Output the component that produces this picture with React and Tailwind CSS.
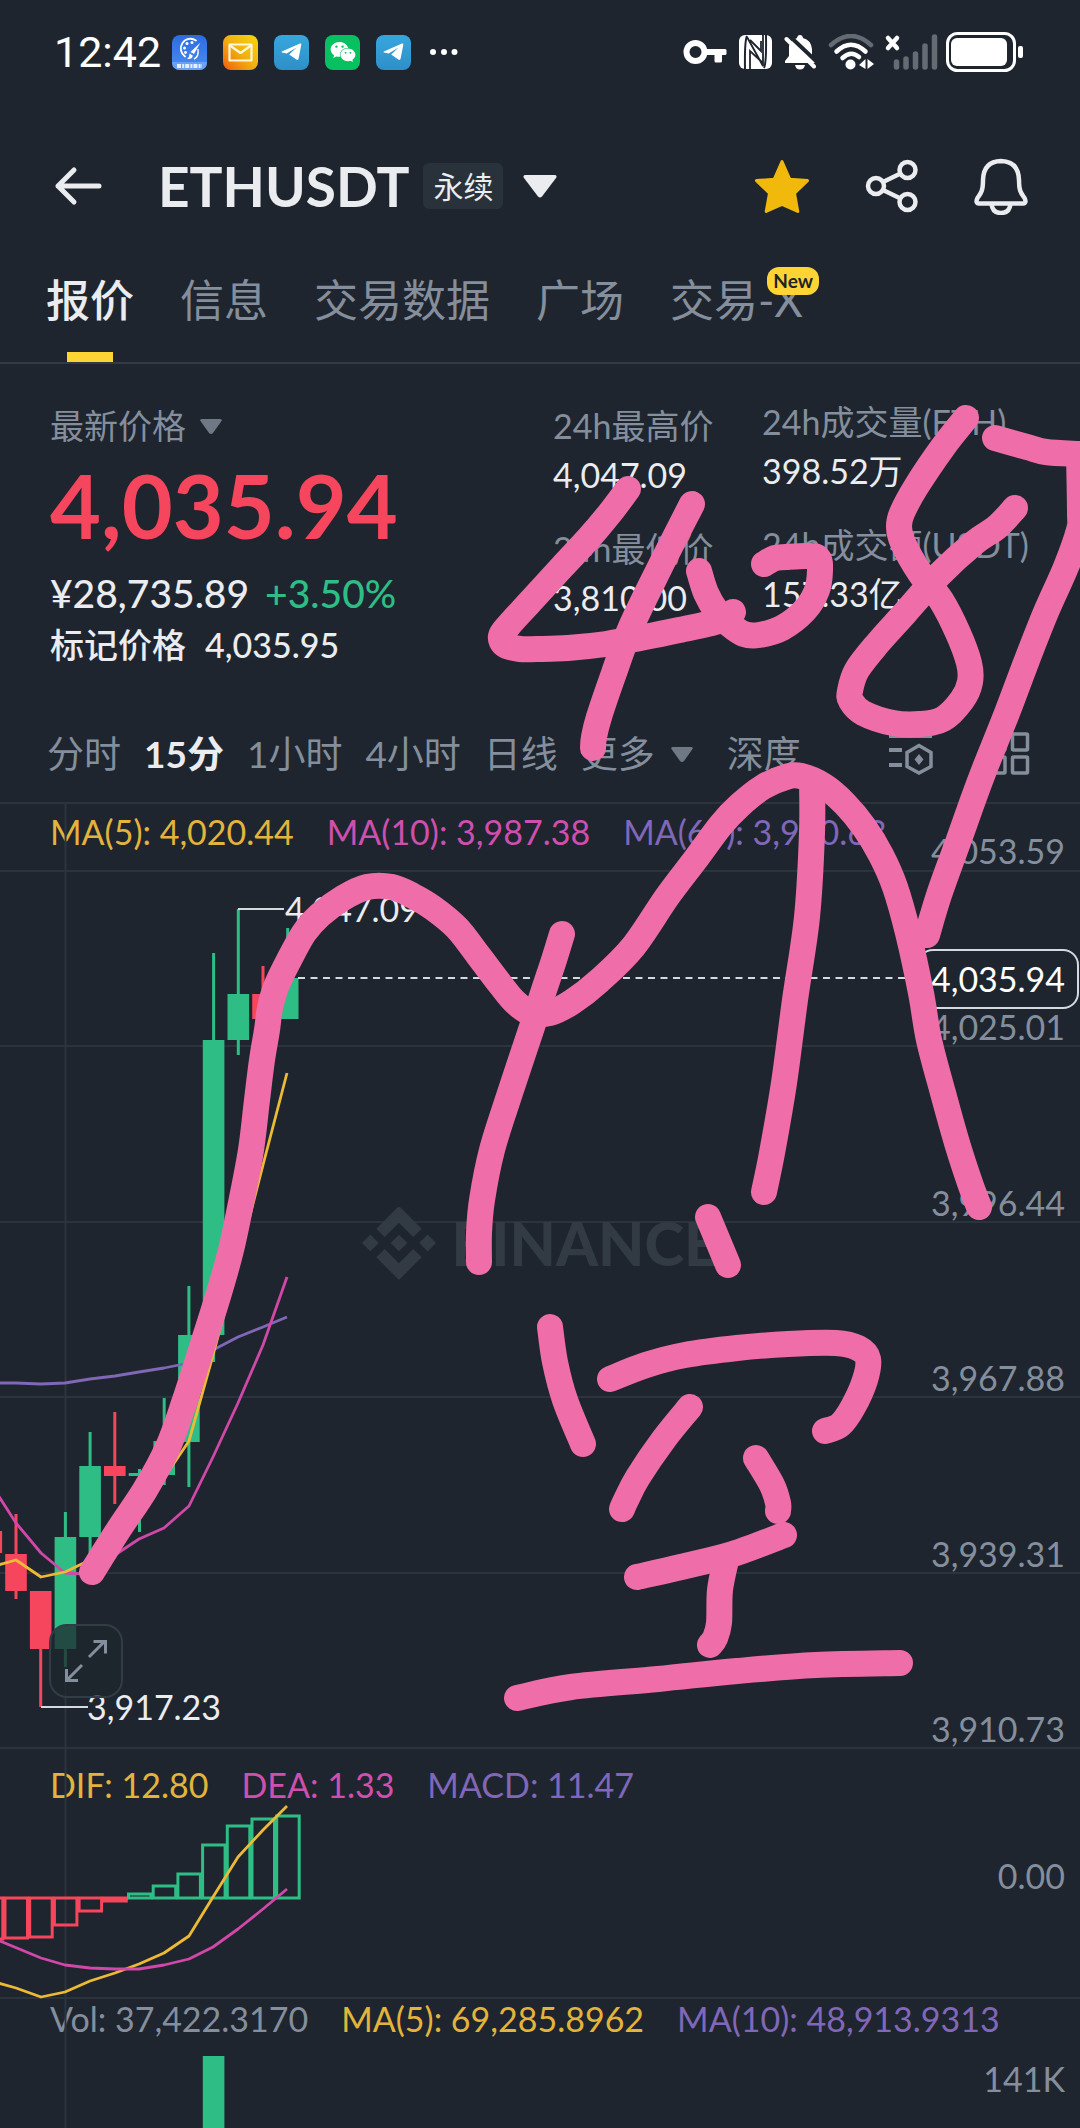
import { FaWeixin } from 'react-icons/fa'
import { SiBinance } from 'react-icons/si'

const TABS = ['报价', '信息', '交易数据', '广场', '交易-X']
const INTERVALS = ['分时', '15分', '1小时', '4小时', '日线']
const AXIS = ['4,025.01', '3,996.44', '3,967.88', '3,939.31', '3,910.73']

const GREEN = '#2ebd85'
const RED = '#f6465d'
const STEP = 24.7

// [high, bodyTop, bodyBottom, low, color]
const CANDLES = [
  [1531, 1531, 1553, 1553, RED],
  [1514, 1554, 1591, 1599, RED],
  [1591, 1591, 1649, 1707, RED],
  [1512, 1537, 1649, 1667, GREEN],
  [1432, 1466, 1537, 1560, GREEN],
  [1412, 1466, 1476, 1504, RED],
  [1469, 1473, 1476, 1532, GREEN],
  [1398, 1441, 1475, 1485, GREEN],
  [1286, 1335, 1442, 1487, GREEN],
  [953, 1040, 1335, 1362, GREEN],
  [909, 994, 1040, 1055, GREEN],
  [966, 994, 1019, 1019, RED],
  [928, 978, 1019, 1019, GREEN],
]

const MACD_BARS = [1939, 1938, 1937, 1925, 1911, 1901, 1894, 1886, 1874, 1845, 1826, 1819, 1816]

const MA5 = [[-9, 1567], [16, 1560], [41, 1577], [65, 1572], [90, 1560], [115, 1524], [139, 1500], [164, 1478], [189, 1441], [213, 1355], [238, 1262], [263, 1165], [287, 1073]]
const MA10 = [[-9, 1484], [16, 1523], [41, 1553], [65, 1573], [85, 1574], [118, 1553], [139, 1539], [164, 1528], [189, 1506], [213, 1457], [238, 1403], [263, 1345], [287, 1277]]
const MA60 = [[-9, 1383], [16, 1383], [41, 1384], [65, 1383], [90, 1379], [115, 1376], [139, 1372], [164, 1368], [189, 1363], [213, 1350], [238, 1337], [263, 1327], [287, 1317]]
const DIF = [[-9, 1981], [16, 1988], [41, 1997], [65, 1992], [90, 1981], [115, 1973], [139, 1964], [164, 1953], [189, 1936], [213, 1897], [238, 1857], [263, 1830], [287, 1806]]
const DEA = [[-9, 1936], [0, 1941], [41, 1958], [65, 1965], [90, 1968], [115, 1969], [139, 1969], [164, 1965], [189, 1959], [213, 1947], [238, 1929], [263, 1909], [287, 1889]]

const STROKES = [
  // 4
  [[628, 489], [610, 513], [589, 538], [562, 567], [530, 602], [509, 625], [501, 636], [505, 645], [520, 649], [537, 649], [568, 648], [606, 644], [645, 637], [679, 630], [719, 621], [733, 612]],
  [[692, 504], [660, 567], [631, 627], [614, 673], [599, 717], [594, 737], [593, 748]],
  // 0
  [[699, 571], [706, 593], [717, 612], [729, 624], [744, 634], [759, 635], [782, 628], [805, 610], [817, 590], [820, 570], [818, 558], [807, 556], [786, 557], [775, 558], [764, 564]],
  // 8
  [[966, 418], [943, 447], [916, 487], [902, 513], [899, 527], [903, 543], [920, 573], [941, 600], [958, 633], [969, 663], [970, 682], [962, 700], [943, 719], [920, 724], [893, 723], [863, 713], [851, 701], [850, 691], [857, 670], [878, 643], [905, 613], [939, 575], [974, 543], [997, 527], [1015, 508]],
  // 7
  [[995, 438], [1027, 447], [1046, 452], [1079, 454]],
  [[1079, 454], [1080, 513], [1079, 530], [1066, 567], [1046, 612], [1027, 660], [1007, 713], [985, 768], [973, 800], [957, 845], [939, 895], [927, 935]],
  // projected path
  [[92, 1572], [119, 1529], [145, 1490], [168, 1447], [185, 1400], [202, 1347], [219, 1293], [231, 1250], [241, 1203], [251, 1150], [257, 1100], [262, 1060], [267, 1030], [270, 1008], [276, 987], [288, 962], [304, 933], [320, 915], [343, 898], [367, 887], [392, 887], [413, 896], [433, 908], [457, 928], [478, 955], [500, 984], [515, 1002], [531, 1013], [550, 1013], [572, 1002], [599, 981], [633, 947], [667, 897], [695, 860], [721, 825], [740, 805], [763, 787], [786, 777], [801, 776], [824, 786], [845, 804], [864, 827], [881, 855], [895, 887], [908, 933], [921, 993], [929, 1040], [943, 1093], [957, 1143], [970, 1183], [979, 1207]],
  [[812, 780], [812, 833], [807, 917], [795, 1000], [784, 1083], [772, 1153], [764, 1192]],
  [[562, 934], [554, 960], [543, 993], [532, 1027], [510, 1093], [492, 1150], [482, 1200], [479, 1233], [479, 1262]],
  // 空
  [[708, 1217], [728, 1265]],
  [[550, 1327], [555, 1362], [565, 1400], [583, 1444]],
  [[610, 1379], [646, 1365], [685, 1355], [737, 1348], [788, 1344], [836, 1343], [858, 1348], [868, 1359], [865, 1380], [853, 1407], [840, 1425], [825, 1431]],
  [[690, 1407], [664, 1439], [638, 1477], [626, 1500], [622, 1509]],
  [[756, 1458], [772, 1485], [778, 1503], [778, 1511]],
  [[637, 1577], [681, 1567], [733, 1554], [784, 1535]],
  [[726, 1560], [720, 1590], [719, 1623], [715, 1638], [710, 1645]],
  [[517, 1698], [571, 1687], [658, 1679], [737, 1671], [816, 1665], [900, 1663]],
]

const line = (pts) => pts.map((p) => p.join(',')).join(' ')

// Catmull-Rom through the points, written as cubic segments
function smooth(pts) {
  let d = `M${pts[0][0]} ${pts[0][1]}`
  for (let i = 0; i < pts.length - 1; i++) {
    const a = pts[i - 1] || pts[i]
    const b = pts[i]
    const c = pts[i + 1]
    const e = pts[i + 2] || c
    d += `C${b[0] + (c[0] - a[0]) / 6} ${b[1] + (c[1] - a[1]) / 6} ${c[0] - (e[0] - b[0]) / 6} ${c[1] - (e[1] - b[1]) / 6} ${c[0]} ${c[1]}`
  }
  return d
}

function Plane() {
  return (
    <span className="flex size-[35px] items-center justify-center rounded-lg bg-gradient-to-b from-[#37a6de] to-[#2f8fc8]">
      <svg width="21" height="18" viewBox="0 0 21 18" fill="#fff">
        <path d="M0.8 8.6 19 0.6Q20.6 0 20.3 1.8L17.6 15.6Q17.2 17.6 15.4 16.5L8.2 11.4 15.6 4.4 5.6 10.4 1 9.5Q0 9.1 0.8 8.6Z" />
      </svg>
    </span>
  )
}

function StatusBar() {
  return (
    <div className="flex h-[104px] items-center pl-[54px] pr-14">
      <span className="mr-3 w-[106px] whitespace-nowrap font-[Roboto] text-[43px] leading-[52px] text-white">12:42</span>
      <div className="flex items-center gap-4">
        <span className="flex size-[35px] items-center justify-center rounded-lg bg-gradient-to-b from-[#2b6be0] to-[#4d8df2]">
          <svg width="35" height="35" viewBox="0 0 35 35" fill="none">
            <path d="M24 5.5A9.5 9.5 0 1 0 13 21.5" stroke="#fff" strokeWidth="1.8" strokeLinecap="round" />
            <g fill="#fff">
              <circle cx="12.5" cy="13" r="1.5" /><circle cx="15" cy="8.5" r="1.5" /><circle cx="20" cy="7.5" r="1.5" /><circle cx="13.5" cy="17.5" r="1.4" />
              <path d="M28.5 7.5 22 19 18.5 17Z" />
              <path d="M17.5 18.5 20.8 20.5Q20.5 24.5 15 24 17.5 22.5 17.5 18.5Z" />
            </g>
            <path d="M22 24Q27 22 26 14" stroke="#fff" strokeWidth="1.4" />
            <path d="M0 27h35v0Q35 35 27 35H8Q0 35 0 27Z" fill="#6ba0f5" />
            <path d="M5 31h25" stroke="#e5efff" strokeWidth="4" strokeDasharray="4 1.2 2 1" />
          </svg>
        </span>
        <span className="flex size-[35px] items-center justify-center rounded-lg bg-gradient-to-bl from-[#f5d80a] via-[#f0b012] to-[#ee5a10]">
          <svg width="25" height="19" viewBox="0 0 25 19" fill="none" stroke="#fff8d8" strokeWidth="2.2" strokeLinejoin="round">
            <rect x="1.5" y="1.5" width="22" height="16" />
            <path d="m2 2.5 10.5 7.5L23 2.5" />
          </svg>
        </span>
        <Plane />
        <span className="flex size-[35px] items-center justify-center rounded-lg bg-[#07c160]">
          <FaWeixin size={26} color="#fff" />
        </span>
        <Plane />
      </div>
      <svg className="ml-[18px]" width="30" height="8" viewBox="0 0 30 8" fill="#fff">
        <circle cx="4" cy="4" r="3" /><circle cx="15" cy="4" r="3" /><circle cx="25.5" cy="4" r="3" />
      </svg>

      <div className="ml-auto flex items-center">
        <svg width="44" height="26" viewBox="0 0 44 26">
          <circle cx="12.5" cy="13" r="9" fill="none" stroke="#fff" strokeWidth="6" />
          <path d="M21 10H42Q43.5 10 43.5 11.5V14.5Q43.5 16 42 16H39V22Q39 23.5 37.5 23.5H33Q31.500 23.5 31.5 22V16H21Z" fill="#fff" />
        </svg>
        <svg className="ml-3" width="33" height="34" viewBox="0 0 33 34">
          <rect width="33" height="34" rx="6" fill="#fff" />
          <path d="M8 1Q5.500 6 6 34M25 33Q27.500 28 27 0" stroke="#1e252e" strokeWidth="2" fill="none" />
          <path d="M11 34V16L24 28M8 2 24 31V0M11 5 22 16V6" stroke="#1e252e" strokeWidth="1.8" fill="none" />
        </svg>
        <svg className="ml-3" width="32" height="36" viewBox="0 0 32 36">
          <path d="M16 1Q18.500 1 19 4 27 6 28 15V22H27L31 29H1V27L5 22V12Q7 6 13 4 13.500 1 16 1Z" fill="#fff" />
          <path d="M11 31H21Q20 35.500 16 35.500T11 31Z" fill="#fff" />
          <path d="M4.500 1 33.500 28.500" stroke="#1e252e" strokeWidth="4" />
          <path d="M2.500 5 30 32.500" stroke="#fff" strokeWidth="4" strokeLinecap="round" />
        </svg>
        <svg className="ml-3" width="47" height="36" viewBox="0 0 47 36" fill="none" strokeLinecap="round">
          <path d="M3 11Q23 -7 43 11" stroke="#656b72" strokeWidth="4.500" />
          <path d="M8.500 17.500Q23 4 37.500 17.500" stroke="#fff" strokeWidth="4.500" />
          <path d="M14.500 24Q23 16 31 23" stroke="#fff" strokeWidth="4.500" />
          <circle cx="22.500" cy="30.500" r="5" fill="#fff" />
          <path d="M37.500 25V35L31 31ZM39.500 25V35L46 30Z" fill="#fff" />
        </svg>
        <svg className="ml-[9px]" width="54" height="36" viewBox="0 0 54 36" fill="none" strokeLinecap="round">
          <path d="m4 4 9 10M13 4 4 14" stroke="#fff" strokeWidth="4.500" />
          <path d="M12.500 28v5M22 25v8M31.500 20v13M41 12v21M50.500 3v30" stroke="#656b72" strokeWidth="5.500" />
        </svg>
        <svg className="ml-2" width="78" height="40" viewBox="0 0 78 40">
          <rect x="1.500" y="1.500" width="67" height="37" rx="10" fill="none" stroke="#fff" strokeWidth="3" />
          <rect x="5" y="6" width="56" height="28" rx="6" fill="#fff" />
          <rect x="72" y="14" width="5" height="12" rx="2" fill="#fff" />
        </svg>
      </div>
    </div>
  )
}

function Header() {
  return (
    <header className="flex h-[164px] items-center pl-[54px] pr-[52px] text-[#eaecef]">
      <button aria-label="返回">
        <svg width="48" height="40" viewBox="0 0 48 40" fill="none" stroke="currentColor" strokeWidth="5" strokeLinecap="round" strokeLinejoin="round">
          <path d="M20 4 4 20l16 16M4 20h41" />
        </svg>
      </button>
      <h1 className="ml-[56px] whitespace-nowrap text-[55px] font-bold leading-[60px]">ETHUSDT</h1>
      <button className="ml-[14px] flex items-center gap-5">
        <span className="rounded-md bg-[#29313b] px-[10px] text-[30px] leading-[46px]">永续</span>
        <svg width="34" height="23" viewBox="0 0 34 23" fill="currentColor">
          <path d="M2 0H32Q34.500 0.500 33 3L19 21.500Q17 23.500 15 21.500L1 3Q-0.500 0.500 2 0Z" />
        </svg>
      </button>
      <div className="ml-auto flex items-center gap-[55px]">
        <button aria-label="收藏">
          <svg width="56" height="56" viewBox="0 0 56 56" fill="#f0b90b" stroke="#f0b90b" strokeWidth="3" strokeLinejoin="round">
            <path d="M28 3.500 35.800 21.300 53.500 22.600 40.500 35.300 43.800 53.500 28 46.500 12.200 53.500 15.500 35.300 2.500 22.600 20.200 21.300Z" />
          </svg>
        </button>
        <button aria-label="分享">
          <svg width="54" height="56" viewBox="0 0 54 56" fill="none" stroke="currentColor" strokeWidth="4.500">
            <circle cx="11" cy="28" r="8" /><circle cx="42.500" cy="12" r="8" /><circle cx="42.500" cy="44" r="8" />
            <path d="m18 24 17.500-8.500M18 32l17.500 8.500" />
          </svg>
        </button>
        <button aria-label="提醒">
          <svg width="54" height="58" viewBox="0 0 54 58" fill="none" stroke="currentColor" strokeWidth="4.500" strokeLinejoin="round">
            <path d="M27 4Q44.500 4.500 45 23C45 34 47 36 50.500 41Q53 46 49 46.500H5Q1 46 3.500 41C7 36 9 34 9 23Q9.500 4.500 27 4Z" />
            <path d="M17.500 47Q18.500 56 27 56T36.500 47" />
          </svg>
        </button>
      </div>
    </header>
  )
}

function Caret() {
  return (
    <svg width="22" height="15" viewBox="0 0 22 15" fill="#6f7985">
      <path d="M1.500 0h19q2 .5 1 2l-8.500 12q-2 2-4 0L.5 2q-1-1.500 1-2Z" />
    </svg>
  )
}

function Stat({ label, value }) {
  return (
    <div>
      <dt className="text-[#848e9c]">{label}</dt>
      <dd className="mt-[9px] text-[#eaecef]">{value}</dd>
    </div>
  )
}

function Quote() {
  return (
    <section className="grid grid-cols-[503fr_209fr_318fr] pl-[50px] pt-[42px] text-[34px] leading-10 whitespace-nowrap">
      <div>
        <button className="flex items-center gap-[14px] text-[#848e9c]">最新价格 <Caret /></button>
        <p className="mt-[19px] text-[88px] font-bold leading-[80px] text-[#f6465d]">4,035.94</p>
        <p className="mt-[26px] flex gap-4 text-[39px] font-medium leading-[44px] text-[#eaecef]">
          ¥28,735.89 <span className="text-[#2ebd85]">+3.50%</span>
        </p>
        <p className="mt-[10px] flex gap-[19px] font-medium text-[#eaecef]">标记价格 <span>4,035.95</span></p>
      </div>
      <dl className="flex flex-col gap-[34px]">
        <Stat label="24h最高价" value="4,047.09" />
        <Stat label="24h最低价" value="3,810.00" />
      </dl>
      <dl className="-mt-1 flex flex-col gap-[34px]">
        <Stat label="24h成交量(ETH)" value="398.52万" />
        <Stat label="24h成交额(USDT)" value="157.33亿" />
      </dl>
    </section>
  )
}

function Intervals() {
  return (
    <nav className="flex items-center pb-[26px] pl-[47px] pr-[50px] pt-[67px] text-[37px] leading-[44px] text-[#848e9c] whitespace-nowrap">
      <div className="flex gap-[23px]">
        {INTERVALS.map((t) => (
          <button key={t} className={t === '15分' ? 'font-bold text-[#eaecef]' : ''}>{t}</button>
        ))}
        <button className="flex items-center gap-4">更多 <Caret /></button>
      </div>
      <button className="ml-[34px]">深度</button>
      <div className="ml-auto flex items-center gap-[54px]">
        <button aria-label="指标设置">
          <svg width="46" height="42" viewBox="0 0 46 42" fill="none" stroke="#848e9c" strokeWidth="4">
            <path d="M1 3h43M1 17h13M1 32h13" />
            <path d="M31 12.500 43 19.500V33.500L31 40 19 33.500V19.500Z" strokeWidth="3.500" />
            <path d="m31 21 4.500 5.500L31 32l-4.500-5.500Z" fill="#848e9c" stroke="none" />
          </svg>
        </button>
        <button aria-label="布局">
          <svg width="42" height="44" viewBox="0 0 42 44" fill="none" stroke="#848e9c" strokeWidth="3.500">
            <rect x="2" y="2" width="15" height="16" rx="1" /><rect x="24.500" y="2" width="15" height="16" rx="1" />
            <rect x="2" y="25" width="15" height="16" rx="1" /><rect x="24.500" y="25" width="15" height="16" rx="1" />
          </svg>
        </button>
      </div>
    </nav>
  )
}

function Drawing() {
  return (
    <svg className="absolute left-0 top-0" width="1080" height="1326" viewBox="0 802 1080 1326" fill="none">
      <path d="M65.500 802V2128" stroke="#2c343d" strokeWidth="2" />
      {CANDLES.map(([high, top, bottom, low, color], i) => {
        const x = 16 + (i - 1) * STEP
        return (
          <g key={i} fill={color}>
            <rect x={x - 1.5} y={high} width="3" height={low - high} />
            <rect x={x - 10.8} y={top} width="21.600" height={bottom - top} />
          </g>
        )
      })}
      {MACD_BARS.map((y, i) => {
        const x = 16 + (i - 1) * STEP
        const up = i > 5
        return (
          <rect key={i} x={x - 11} y={up ? y : 1898} width="22.500" height={Math.max(up ? 1898 - y : y - 1898, 2)} stroke={up ? GREEN : RED} strokeWidth="3" />
        )
      })}
      <rect x="202.800" y="2056" width="21.600" height="72" fill={GREEN} />
      <g strokeWidth="2.800" strokeLinejoin="round">
        <polyline points={line(MA60)} stroke="#8067b7" />
        <polyline points={line(MA10)} stroke="#d048a8" />
        <polyline points={line(MA5)} stroke="#edba35" />
        <polyline points={line(DIF)} stroke="#edba35" />
        <polyline points={line(DEA)} stroke="#d048a8" />
      </g>
      <path d="M298 978H928" stroke="#d5dae0" strokeWidth="2" strokeDasharray="7 5.500" />
      <path d="M238 909H284M41 1707H88" stroke="#d5dae0" strokeWidth="2" />
      <text x="285" y="922" fill="#eaecef" className="text-[34px]">4,047.09</text>
      <text x="87" y="1720" fill="#eaecef" className="text-[34px]">3,917.23</text>
    </svg>
  )
}

function Legend({ items }) {
  return (
    <div className="flex gap-[33px] pl-[50px] whitespace-nowrap">
      {items.map(([text, color]) => (
        <span key={text} className={color}>{text}</span>
      ))}
    </div>
  )
}

function Chart() {
  return (
    <section className="relative text-[34px] leading-10 text-[#848e9c]">
      <div className="flex h-[68px] items-start justify-between border-t-2 border-[#2b333c] pr-[15px] pt-2">
        <Legend
          items={[
            ['MA(5): 4,020.44', 'text-[#e3b43c]'],
            ['MA(10): 3,987.38', 'text-[#cf4fae]'],
            ['MA(60): 3,980.63', 'text-[#8067b7]'],
          ]}
        />
        <span className="mt-[19px]">4,053.59</span>
      </div>
      <div className="grid h-[877px] grid-rows-5">
        {AXIS.map((v) => (
          <div key={v} className="flex items-end justify-end border-t-2 border-[#2b333c] pr-[15px] leading-9">{v}</div>
        ))}
      </div>
      <div className="flex h-[250px] justify-between border-t-2 border-[#2b333c] pr-[15px] pt-[16px]">
        <Legend
          items={[
            ['DIF: 12.80', 'text-[#e3b43c]'],
            ['DEA: 1.33', 'text-[#cf4fae]'],
            ['MACD: 11.47', 'text-[#8067b7]'],
          ]}
        />
        <span className="mt-[91px]">0.00</span>
      </div>
      <div className="h-[131px] border-t-2 border-[#2b333c]">
        <Legend
          items={[
            ['Vol: 37,422.3170', ''],
            ['MA(5): 69,285.8962', 'text-[#e3b43c]'],
            ['MA(10): 48,913.9313', 'text-[#8067b7]'],
          ]}
        />
        <p className="pr-[15px] pt-5 text-right">141K</p>
      </div>

      <div className="absolute inset-x-0 top-[404px] flex items-center justify-center gap-4 text-[60px] font-black leading-[73px] text-[#323a43]">
        <SiBinance size={74} />
        BINANCE
      </div>
      <Drawing />
      <div className="absolute right-px top-[147px] rounded-2xl border-2 border-[#d5dae0] bg-[#1e252e] py-2 pl-3 pr-3 text-white">4,035.94</div>
      <button aria-label="全屏" className="absolute left-[49px] top-[822px] flex size-[74px] items-center justify-center rounded-[18px] border-2 border-[#333b45] bg-[#1e252e]/75">
        <svg width="44" height="44" viewBox="0 0 44 44" fill="none" stroke="#848e9c" strokeWidth="3">
          <path d="M25 18 41 2M29.500 2.500H41.500V14.500M18 26 2.500 41.500M2.500 30V41.500H14" />
        </svg>
      </button>
    </section>
  )
}

export default function App() {
  return (
    <main className="relative overflow-hidden bg-[#1e252e] font-[Lato,'Noto_Sans_CJK_SC',sans-serif]">
      <StatusBar />
      <Header />
      <nav className="flex h-24 items-start gap-[46px] border-b-2 border-[#333a43] pl-[46px] pt-[6px] text-[44px] leading-[52px] text-[#848e9c] whitespace-nowrap">
        {TABS.map((t, i) => (
          <button key={t} className={`relative flex h-[88px] flex-col items-center justify-between ${i === 0 ? 'font-medium text-[#eaecef]' : ''}`}>
            {t}
            {i === 0 && <span className="h-[10px] w-[46px] bg-[#fcd535]" />}
            {i === 4 && (
              <span className="absolute -right-4 -top-[7px] rounded-xl bg-[#fcd535] px-[6px] text-[19px] font-bold leading-[28px] text-[#1e2329]">New</span>
            )}
          </button>
        ))}
      </nav>
      <Quote />
      <Intervals />
      <Chart />
      <svg className="pointer-events-none absolute left-0 top-0" width="1080" height="2128" viewBox="0 0 1080 2128" fill="none" stroke="#ef6ea9" strokeWidth="26" strokeLinecap="round" strokeLinejoin="round">
        {STROKES.map((pts, i) => (
          <path key={i} d={smooth(pts)} />
        ))}
      </svg>
    </main>
  )
}
